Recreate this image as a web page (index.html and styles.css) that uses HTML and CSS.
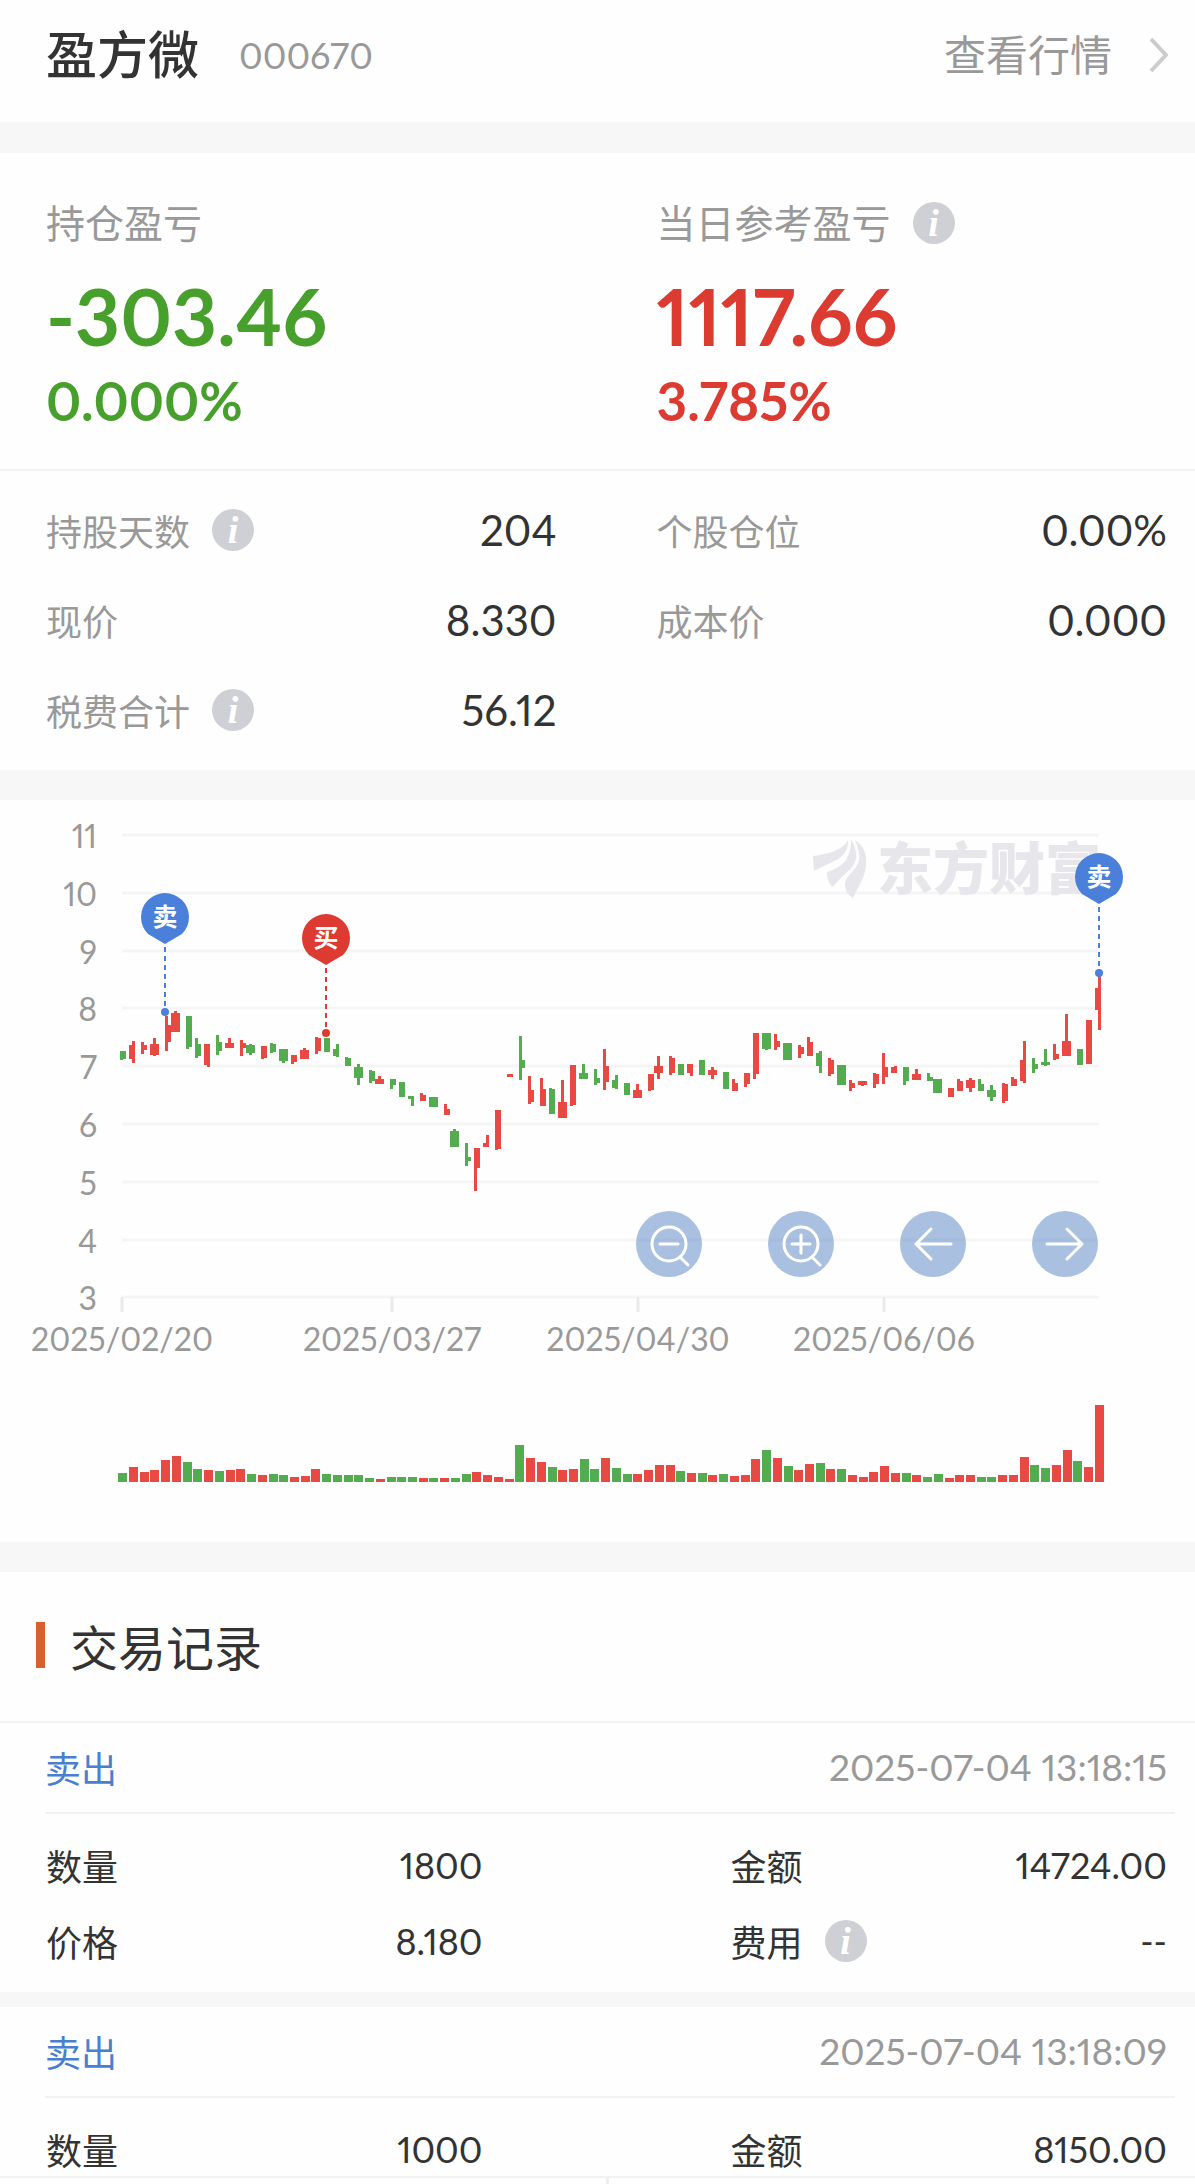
FILE: index.html
```
<!DOCTYPE html>
<html lang="zh-CN">
<head>
    <meta charset="UTF-8">
    <meta name="viewport" content="width=device-width, initial-scale=1.0">
    <title>盈方微 000670</title>
    <link rel="stylesheet" href="styles.css">
</head>
<body>
    <header class="stock-header">
        <h1>盈方微</h1>
        <span class="stock-code">000670</span>
        <a class="quote-link" href="#quote">查看行情
            <svg class="chevron" viewBox="0 0 20 36"><path d="M3 2 L18 18 L3 34"/></svg>
        </a>
    </header>

    <section class="summary">
        <div class="profit">
            <div class="profit-item down">
                <div class="label">持仓盈亏</div>
                <div class="amount">-303.46</div>
                <div class="percent">0.000%</div>
            </div>
            <div class="profit-item up">
                <div class="label">当日参考盈亏 <button class="info" type="button">i</button></div>
                <div class="amount">1117.66</div>
                <div class="percent">3.785%</div>
            </div>
        </div>
        <div class="details">
            <div class="row"><span class="label">持股天数 <button class="info" type="button">i</button></span><span class="value">204</span></div>
            <div class="row"><span class="label">个股仓位</span><span class="value">0.00%</span></div>
            <div class="row"><span class="label">现价</span><span class="value">8.330</span></div>
            <div class="row"><span class="label">成本价</span><span class="value">0.000</span></div>
            <div class="row"><span class="label">税费合计 <button class="info" type="button">i</button></span><span class="value">56.12</span></div>
        </div>
    </section>

    <section class="chart">
        <svg id="kline" viewBox="0 0 1195 742">
            <g id="grid"></g>
            <g class="watermark">
                <path d="M813 56 C829 54 843 50 848 40 C849 59 832 61 814 71 Z"/>
                <path d="M827 72 C842 68 852 58 851 39 C861 57 855 66 846 73 C841 77 837 82 833 87 C828 83 827 78 827 72 Z"/>
                <path d="M855 40 C864 46 867 55 866 65 C865 79 857 88 853 98 C847 94 845 90 845 84 C845 75 862 68 859 53 C858 48 857 44 855 40 Z"/>
                <text x="877" y="89">东方财富</text>
            </g>
            <g id="candles"></g>
            <g id="volume"></g>
            <g id="pins"></g>
        </svg>
        <div class="chart-tools">
            <button type="button" aria-label="缩小"><svg viewBox="0 0 66 66"><circle cx="33" cy="33" r="17"/><path d="M24 33 H42 M44 46 L52 54"/></svg></button>
            <button type="button" aria-label="放大"><svg viewBox="0 0 66 66"><circle cx="33" cy="33" r="17"/><path d="M24 33 H42 M33 24 V42 M44 46 L52 54"/></svg></button>
            <button type="button" aria-label="向左"><svg viewBox="0 0 66 66"><path d="M51 33 H16 M31 18 L16 33 L31 48"/></svg></button>
            <button type="button" aria-label="向右"><svg viewBox="0 0 66 66"><path d="M15 33 H50 M35 18 L50 33 L35 48"/></svg></button>
        </div>
    </section>

    <section class="records">
        <h2>交易记录</h2>
        <article class="record">
            <div class="record-head"><span class="side">卖出</span><time>2025-07-04 13:18:15</time></div>
            <div class="record-body">
                <div class="row"><span>数量</span><span>1800</span></div>
                <div class="row"><span>金额</span><span>14724.00</span></div>
                <div class="row"><span>价格</span><span>8.180</span></div>
                <div class="row"><span class="label-dark">费用 <button class="info" type="button">i</button></span><span>--</span></div>
            </div>
        </article>
        <article class="record">
            <div class="record-head"><span class="side">卖出</span><time>2025-07-04 13:18:09</time></div>
            <div class="record-body">
                <div class="row"><span>数量</span><span>1000</span></div>
                <div class="row"><span>金额</span><span>8150.00</span></div>
            </div>
        </article>
    </section>

    <footer class="bottom-bar"><span></span><span></span></footer>

    <script src="chart.js"></script>
</body>
</html>
```
FILE: styles.css
```
* {
    box-sizing: border-box;
}

body {
    margin: 0;
    background: #f7f7f7;
    color: #333;
    font-family: Lato, "Noto Sans CJK SC", sans-serif;
    font-variant-numeric: proportional-nums;
}

h1,
h2 {
    margin: 0;
}

.stock-header {
    display: flex;
    align-items: center;
    height: 122px;
    padding: 0 27px 12px 46px;
    background: #fefefe;
}

h1 {
    font-size: 51px;
    font-weight: 500;
    line-height: 60px;
}

.stock-code {
    margin-left: 40px;
    font-size: 36px;
    color: #999;
}

.quote-link {
    display: flex;
    align-items: center;
    gap: 36px;
    margin-left: auto;
    font-size: 42px;
    line-height: 60px;
    color: #999;
    text-decoration: none;
}

.chevron {
    width: 20px;
    height: 36px;
    fill: none;
    stroke: #ccc;
    stroke-width: 4;
}

.summary {
    margin-top: 31px;
    background: #fefefe;
}

.profit,
.details {
    display: grid;
    grid-template-columns: 1fr 1fr;
    column-gap: 100px;
    padding: 0 28px 0 46px;
}

.profit {
    height: 318px;
    padding-top: 40px;
    border-bottom: 2px solid #f2f2f2;
}

.label,
.label-dark {
    display: flex;
    align-items: center;
    gap: 22px;
}

.label {
    font-size: 36px;
    color: #999;
}

.profit .label {
    font-size: 39px;
    line-height: 60px;
}

.amount {
    margin-top: 13px;
    font-size: 78px;
    font-weight: 700;
    line-height: 100px;
}

.percent {
    font-size: 53px;
    font-weight: 700;
    line-height: 70px;
}

.down {
    color: #479f2c;
}

.up {
    color: #dc3b32;
}

.info {
    width: 42px;
    height: 42px;
    padding: 0;
    border: none;
    border-radius: 50%;
    background: #cfd0d5;
    color: #fff;
    font: italic bold 38px/40px "Liberation Serif", serif;
}

.details {
    padding-top: 15px;
    padding-bottom: 14px;
}

.row {
    display: flex;
    align-items: center;
    justify-content: space-between;
    padding-bottom: 2px;
}

.details .row {
    height: 90px;
}

.value {
    font-size: 42px;
}

.chart {
    position: relative;
    margin-top: 30px;
    background: #fefefe;
}

#kline {
    display: block;
    width: 100%;
}

.axis-label {
    font-size: 32px;
    fill: #999;
}

.grid-line {
    stroke: #f5f5f6;
    stroke-width: 3;
}

.tick {
    stroke: #ebebeb;
    stroke-width: 3;
}

.watermark {
    fill: #e6e6eb;
}

.watermark text {
    font-size: 56px;
    font-weight: 900;
}

.rise {
    fill: #e64a43;
}

.fall {
    fill: #53ad50;
}

.pin text {
    font-size: 25px;
    font-weight: 700;
    fill: #fff;
    text-anchor: middle;
}

.pin line {
    stroke-width: 2;
    stroke-dasharray: 5 4;
}

.pin.sell {
    fill: #4a80d9;
    stroke: #4a80d9;
}

.pin.buy {
    fill: #dd3a32;
    stroke: #dd3a32;
}

.pin circle,
.pin path,
.pin text {
    stroke: none;
}

/* zoom and pan buttons lie over the plot */
.chart-tools {
    position: absolute;
    top: 411px;
    right: 97px;
    display: flex;
    gap: 66px;
}

.chart-tools button {
    width: 66px;
    height: 66px;
    padding: 0;
    border: none;
    border-radius: 50%;
    background: rgba(85, 130, 196, 0.5);
}

.chart-tools svg {
    display: block;
    fill: none;
    stroke: #fff;
    stroke-width: 3;
    stroke-linecap: round;
    stroke-linejoin: round;
}

.records {
    margin-top: 30px;
}

h2 {
    display: flex;
    align-items: center;
    gap: 25px;
    height: 149px;
    padding: 0 0 3px 36px;
    background: #fefefe;
    font-size: 48px;
    font-weight: 400;
}

h2::before {
    content: "";
    width: 9px;
    height: 46px;
    background: #d8602a;
}

.record {
    background: #fefefe;
    border-top: 2px solid #f2f2f2;
    font-size: 36px;
}

.record-head {
    display: flex;
    align-items: center;
    justify-content: space-between;
    height: 91px;
    margin: 0 20px 0 45px;
    padding: 0 8px 2px 0;
    border-bottom: 2px solid #f2f2f2;
}

.side {
    color: #4a7fd0;
}

time {
    font-size: 37px;
    color: #999;
}

.record-body {
    display: grid;
    grid-template-columns: 1fr 1fr;
    column-gap: 248px;
    padding: 14px 28px 12px 46px;
}

.record-body .row {
    height: 76px;
}

.record + .record {
    margin-top: 15px;
    border-top: none;
    overflow: hidden;
}

/* the second record runs under the bottom bar */
.record + .record .record-body {
    height: 78px;
    padding-bottom: 0;
}

.bottom-bar {
    display: flex;
    height: 8px;
    background: #fefefe;
    border-top: 2px solid #f2f2f2;
}

.bottom-bar span:first-child {
    width: 51%;
    border-right: 3px solid #eee;
}
```
FILE: chart.js
```
const START = 122.3;
const STEP = 10.73;
const BASE = 682;   // bottom of the volume bars

// wick side (L, R, C), colour, body top, body bottom, high, low
const candles = `
Lg 703 724 703 728|Rr 686 724 674 735|Lr 685 701 678 711|Cr 683 714 667 717|Lr 631 678 604 703|Cr 596 650 591 650
Lg 604 692 604 696|Lg 683 717 667 722|Rr 682 741 682 747|Lg 678 702 657 714|Cr 679 694 665 694|Lr 679 695 671 718
Cg 686 708 682 714|Lr 688 723 688 726|Lg 682 706 680 707|Cg 697 732 697 735|Lr 714 733 714 738|Cr 699 726 695 726
Lr 667 704 664 710|Lg 665 706 665 706|Rg 698 718 683 719|Lg 721 744 719 744|Cg 748 779 740 797|Lg 759 786 757 791
Cr 780 794 772 794|Lg 780 797 780 809|Lg 790 832 790 832|Rg 829 838 829 858|Lr 825 842 819 843|Cg 831 860 831 860
Lr 864 881 850 881|Cg 926 972 920 972|Lg 1000 1012 959 1025|Lr 975 1029 973 1096|Rr 961 971 938 972|Lr 868 976 868 979
Lr 767 775 767 775|Lg 727 751 660 785|Lr 811 845 774 851|Lr 808 856 778 856|Lg 809 880 805 880|Cr 846 890 783 890
Lr 741 855 741 858|Cg 763 780 738 780|Lg 777 791 753 797|Lr 745 789 696 811|Rg 784 806 769 810|Lg 793 825 793 825
Cr 813 835 794 835|Lr 766 812 766 815|Cr 746 765 717 781|Lr 723 763 718 771|Lg 740 771 740 771|Rr 738 763 738 774
Lg 727 770 727 770|Cr 757 770 747 781|Lg 762 808 762 808|Lr 793 815 780 815|Lr 763 796 763 803|Lr 652 768 652 780
Cg 652 697 652 701|Lr 674 692 656 700|Cg 680 728 680 728|Lr 691 712 686 721|Lr 677 718 664 718|Rg 708 746 702 763
Lr 728 768 721 774|Cg 741 799 741 799|Lr 791 807 785 815|Cr 786 797 786 802|Lr 766 794 763 807|Lr 748 776 707 795
Rr 748 764 744 764|Lg 748 786 748 797|Cr 767 784 752 784|Lg 775 786 765 786|Cg 780 821 780 821|Lr 807 831 807 831
Lr 787 816 780 816|Cr 785 806 777 817|Lg 794 815 780 815|Cg 812 831 799 842|Lr 796 844 791 848|Lr 780 801 775 801
Rr 727 788 674 792|Lg 740 753 721 763|Cg 733 741 697 744|Lr 710 724 683 728|Cr 674 716 599 716|Lg 697 741 697 741
Lr 617 738 617 738|Rr 525 589 490 643`.trim().split(/[|\n]/);

const volumes = [
    26, 44, 30, 37, 66, 77, 59, 38, 36, 32, 36, 38, 23, 21, 25, 22, 16, 18, 40, 24, 21, 21, 22,
    12, 8, 14, 15, 14, 12, 12, 11, 13, 25, 30, 20, 15, 10, 110, 73, 59, 45, 36, 40, 68, 38, 71,
    41, 25, 25, 35, 50, 50, 32, 28, 26, 22, 23, 17, 22, 68, 95, 71, 49, 37, 54, 56, 40, 38, 22,
    16, 31, 49, 26, 27, 20, 15, 23, 11, 20, 20, 16, 14, 20, 21, 74, 52, 43, 50, 97, 64, 46, 231
];

const rect = (cls, x, y, w, h) => `<rect class="${cls}" x="${x}" y="${y}" width="${w}" height="${Math.max(h, 1)}"/>`;
const level = v => Math.round(v / 2.8);

let grid = '';
for (let i = 0; i < 9; i++) {
    const y = Math.round(35 + i * 57.8);
    grid += `<line class="grid-line" x1="122" x2="1099" y1="${y}" y2="${y}"/>`;
    grid += `<text class="axis-label" x="97" y="${y + 13}" text-anchor="end">${11 - i}</text>`;
}
[[122, '2025/02/20'], [392, '2025/03/27'], [638, '2025/04/30'], [884, '2025/06/06']].forEach(([x, date]) => {
    grid += `<line class="tick" x1="${x}" x2="${x}" y1="497" y2="512"/>`;
    grid += `<text class="axis-label" x="${x}" y="551" text-anchor="middle">${date}</text>`;
});
document.getElementById('grid').innerHTML = grid;

let bars = '';
let vols = '';
candles.forEach((row, i) => {
    const [kind, ...nums] = row.split(' ');
    const [top, bottom, high, low] = nums.map(n => level(Number(n)));
    const cls = kind[1] === 'r' ? 'rise' : 'fall';
    const wick = Math.floor((START + i * STEP) / 3) * 3;
    const left = kind[0] === 'L' ? wick : wick - 3;
    bars += rect(cls, left, top, kind[0] === 'C' ? 9 : 6, bottom - top);
    bars += rect(cls, wick, high, 3, low - high);

    const h = Math.round(volumes[i] / 3);
    vols += rect(cls, Math.round(START + i * STEP - 4), BASE - h, 9, h);
});
document.getElementById('candles').innerHTML = bars;
document.getElementById('volume').innerHTML = vols;

const pins = [
    { x: 165, y: 117, dot: 212, type: 'sell', text: '卖' },
    { x: 326, y: 138, dot: 233, type: 'buy', text: '买' },
    { x: 1099, y: 77, dot: 173, type: 'sell', text: '卖' }
];
document.getElementById('pins').innerHTML = pins.map(p => `
    <g class="pin ${p.type}">
        <line x1="${p.x}" x2="${p.x}" y1="${p.y + 30}" y2="${p.dot}"/>
        <circle cx="${p.x}" cy="${p.dot}" r="4"/>
        <path d="M${p.x} ${p.y + 27} L${p.x - 17} ${p.y + 17} A24 24 0 1 1 ${p.x + 17} ${p.y + 17} Z"/>
        <text x="${p.x}" y="${p.y + 9}">${p.text}</text>
    </g>`).join('');
```
